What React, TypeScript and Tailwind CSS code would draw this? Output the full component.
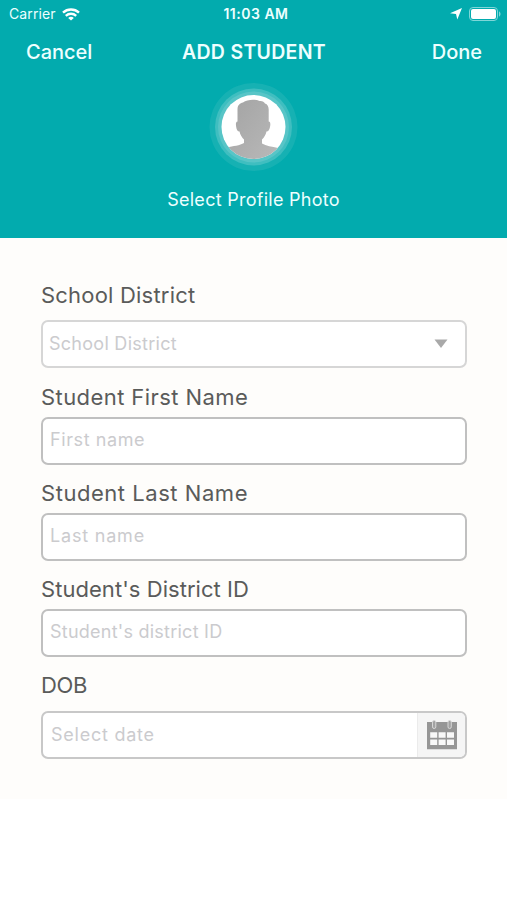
import type { ReactNode } from "react";

type FieldProps = {
  label: string;
  placeholder: string;
  labelClass?: string;
  textClass?: string;
  boxClass?: string;
  children?: ReactNode;
};

function Field({ label, placeholder, labelClass = "", textClass = "", boxClass = "", children }: FieldProps) {
  return (
    <div className="flex flex-col">
      <label className={`h-8 text-[22px] leading-8 whitespace-nowrap text-[#5a5b5a] ${labelClass}`}>{label}</label>
      <div className={`flex h-12 items-center justify-between overflow-hidden rounded-[7px] border-2 bg-white ${boxClass}`}>
        <span className={`text-[18px] leading-6 whitespace-nowrap text-[#cbcbce] ${textClass}`}>{placeholder}</span>
        {children}
      </div>
    </div>
  );
}

function WifiIcon() {
  return (
    <svg width="18" height="13" viewBox="0 0 18 13" fill="none" stroke="white" strokeWidth="2.4">
      <path d="M1 4.6C5.5.4 12.5.4 17 4.6" />
      <path d="M3.8 7.8c3-2.7 7.4-2.7 10.4 0" />
      <path d="M9 12.500 6.200 9.900c1.600-1.400 4-1.400 5.600 0z" fill="white" stroke="none" />
    </svg>
  );
}

function Avatar() {
  return (
    <svg width="90" height="90" viewBox="0 0 90 90">
      <defs>
        <linearGradient id="person" x1="0" y1="0" x2="1" y2="1">
          <stop offset="0" stopColor="#a3a3a3" />
          <stop offset="1" stopColor="#bababa" />
        </linearGradient>
        <clipPath id="face">
          <circle cx="44.5" cy="45" r="32" />
        </clipPath>
      </defs>
      <circle cx="44.5" cy="45" r="44" fill="#16b1b3" />
      <circle cx="44.5" cy="45" r="38.5" fill="#3fbec0" />
      <circle cx="44.5" cy="45" r="35.5" fill="#58c5c7" />
      <circle cx="44.5" cy="45" r="32" fill="white" />
      <path
        clipPath="url(#face)"
        fill="url(#person)"
        d="M28.5 39.500V27c.3-4 2.500-6 5.500-6.500 4-3 12-3.500 16.500-1.500 3-.3 4.500.8 5.500 2.500 2.500.8 3.700 3 3.700 6v12c2 .2 1.800 3 1.300 5.500-.5 2.500-1.500 4.500-3.500 4.500-.8 3.500-2.500 6-4.500 8v4c4 2.500 10 3 16 4.500v18H18V65.500c6-1.500 13-2 17-4.500v-3.500c-2-2-3.700-4.500-4.500-8-2 0-3-2-3.300-4.500-.4-2.500-.7-5 1.300-5.500z"
      />
    </svg>
  );
}

function CalendarIcon() {
  return (
    <svg width="30" height="30" viewBox="0 0 30 30">
      <path d="M0 2h30v27.300H0z" fill="#969696" />
      <path d="M3.200 12.200h7v5.600h-7zm8.400 0h7v5.600h-7zm8.400 0h7v5.600h-7zM3.200 19.500h7v5.600h-7zm8.400 0h7v5.600h-7zm8.400 0h7v5.600h-7z" fill="#f8f8f8" />
      <rect x="5.500" y=".5" width="3.300" height="8" rx="1.600" fill="#a2a2a2" stroke="#d8d8d8" />
      <rect x="21" y=".5" width="3.300" height="8" rx="1.600" fill="#a2a2a2" stroke="#d8d8d8" />
    </svg>
  );
}

export default function App() {
  return (
    <div className="h-[900px] w-[507px] overflow-hidden bg-white font-['Inter',sans-serif]">
      <header className="flex h-[238px] flex-col items-center bg-[#02abae] text-[#edffff]">
        {/* Status bar */}
        <div className="grid h-7 w-full grid-cols-3 items-center pr-[6px] pl-[9px] text-[14px] leading-5">
          <div className="flex items-center gap-[6px]">
            <span className="tracking-[0.1px]">Carrier</span>
            <WifiIcon />
          </div>
          <span className="pl-[2px] text-center font-semibold tracking-[0.5px] whitespace-nowrap">11:03 AM</span>
          <div className="flex items-center justify-end gap-[7px]">
            <svg width="12" height="12" viewBox="0 0 12 12" fill="white">
              <path d="M12 0 7.300 11.500 6 6 0 5.300z" />
            </svg>
            <svg width="32" height="14" viewBox="0 0 32 14">
              <rect x=".5" y=".5" width="28" height="13" rx="3.500" fill="none" stroke="#7fd6d8" />
              <rect x="2" y="2" width="25" height="10" rx="2" fill="white" />
              <path d="M30 4.500c2 .5 2 4.500 0 5z" fill="#7fd6d8" />
            </svg>
          </div>
        </div>

        {/* Navigation */}
        <div className="grid h-12 w-full grid-cols-3 items-center pr-[25px] pl-[26px] text-[20px] leading-6 font-medium">
          <span>Cancel</span>
          <h1 className="text-center text-[19.5px] font-semibold tracking-[0.3px] whitespace-nowrap">ADD STUDENT</h1>
          <span className="text-right">Done</span>
        </div>

        <button className="mt-[6px] flex flex-col items-center">
          <Avatar />
          <span className="mt-4 text-[18px] leading-6 tracking-[0.27px] whitespace-nowrap">Select Profile Photo</span>
        </button>
      </header>

      <main className="flex h-[561px] flex-col bg-[#fefdfb] pt-[41px] pr-10 pl-[41px]">
        <Field
          label="School District"
          placeholder="School District"
          labelClass="tracking-[0.2px]"
          textClass="pb-px tracking-[0.27px]"
          boxClass="mt-[9px] mb-px border-[#d6d6d6] pr-[17px] pl-[6px]"
        >
          <svg width="14" height="10" viewBox="0 0 14 10">
            <path d="M.5.5h13L7 9z" fill="#a9a9a9" />
          </svg>
        </Field>
        <div className="mt-3">
          <Field
            label="Student First Name"
            placeholder="First name"
            labelClass="tracking-[0.42px]"
            textClass="pb-[2px] tracking-[0.6px]"
            boxClass="mt-1 border-[#c0c0c0] pl-[7px]"
          />
        </div>
        <div className="mt-3">
          <Field
            label="Student Last Name"
            placeholder="Last name"
            labelClass="tracking-[0.54px]"
            textClass="pb-[2px] tracking-[0.8px]"
            boxClass="mt-1 border-[#c0c0c0] pl-[7px]"
          />
        </div>
        <div className="mt-3">
          <Field
            label="Student's District ID"
            placeholder="Student's district ID"
            labelClass="tracking-[0.05px]"
            textClass="pb-[2px] tracking-[0.24px]"
            boxClass="mt-1 border-[#c0c0c0] pl-[7px]"
          />
        </div>
        <div className="mt-3">
          <Field
            label="DOB"
            placeholder="Select date"
            labelClass="tracking-[-0.3px]"
            textClass="pb-px tracking-[0.75px]"
            boxClass="mt-[10px] border-[#c8c8c8] pl-2"
          >
            <div className="flex h-full w-12 items-center justify-center border-l border-[#ebebeb] bg-[#f5f5f5]">
              <CalendarIcon />
            </div>
          </Field>
        </div>
      </main>
    </div>
  );
}
